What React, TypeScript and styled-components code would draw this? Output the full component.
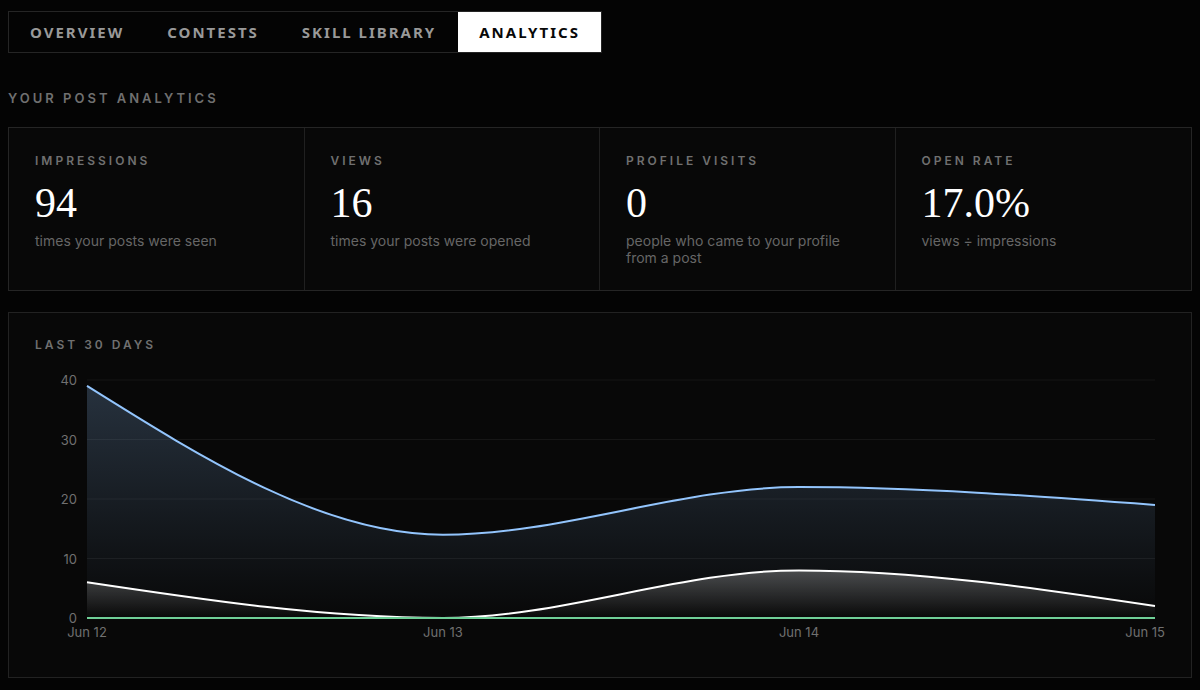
import React, { useLayoutEffect, useRef, useState } from "react";
import styled, { createGlobalStyle } from "styled-components";

const GlobalStyle = createGlobalStyle`
  *, *::before, *::after { box-sizing: border-box; }
  html { background: #040404; }
  body {
    margin: 0;
    color: #fff;
    font-family: "Inter", "Liberation Sans", sans-serif;
  }
`;

const Page = styled.main`
  padding: 11px 8px 12px;
`;

const Tabs = styled.nav`
  display: flex;
  gap: 1px;
  width: fit-content;
  border: 1px solid #252525;
`;

const Tab = styled.button<{ $active?: boolean }>`
  height: 40px;
  padding: 0 21px;
  border: 0;
  background: ${(p) => (p.$active ? "#fff" : "transparent")};
  color: ${(p) => (p.$active ? "#080808" : "#999")};
  font: 700 15px/20px "Noto Sans", sans-serif;
  letter-spacing: 2px;
  text-transform: uppercase;
  white-space: nowrap;
  cursor: pointer;
`;

const PageTitle = styled.h2`
  margin: 35px 0 19px;
  color: #707070;
  font-size: 13px;
  line-height: 20px;
  font-weight: 600;
  letter-spacing: 3px;
  text-transform: uppercase;
`;

const Stats = styled.section`
  display: grid;
  grid-template-columns: repeat(4, minmax(0, 1fr));
  border: 1px solid #252525;
  background: #080808;
`;

const Stat = styled.article`
  min-height: 162px;
  padding: 25px 26px 24px;
  &:not(:last-child) {
    border-right: 1px solid #202020;
  }
`;

const Label = styled.h3`
  margin: 0;
  color: #707070;
  font-size: 12px;
  line-height: 16px;
  font-weight: 600;
  letter-spacing: 3px;
  text-transform: uppercase;
`;

const Value = styled.p`
  margin: 13px 0 8px;
  font-family: Georgia, "Liberation Serif", serif;
  font-size: 42px;
  line-height: 42px;
`;

const Note = styled.p`
  max-width: 240px;
  margin: 0;
  color: #666;
  font-size: 14px;
  line-height: 17px;
`;

const ChartCard = styled.section`
  margin-top: 21px;
  padding: 24px 26px 25px;
  border: 1px solid #222;
  background: #080808;
`;

const ChartFrame = styled.div`
  height: 283px;
  margin-top: 16px;
`;

const ChartSvg = styled.svg`
  display: block;
  width: 100%;
  height: 100%;
`;

const AxisText = styled.text`
  fill: #707070;
  font-size: 13px;
`;

const stats = [
  { label: "Impressions", value: "94", note: "times your posts were seen" },
  { label: "Views", value: "16", note: "times your posts were opened" },
  { label: "Profile visits", value: "0", note: "people who came to your profile from a post" },
  { label: "Open rate", value: "17.0%", note: "views ÷ impressions" },
];

const days = ["Jun 12", "Jun 13", "Jun 14", "Jun 15"];
const series = [
  { id: "impressions", color: "#93c5fd", opacity: 0.22, values: [39, 14, 22, 19] },
  { id: "views", color: "#ffffff", opacity: 0.25, values: [6, 0, 8, 2] },
  { id: "visits", color: "#6fcf97", opacity: 0.2, values: [0, 0, 0, 0] },
];

type Point = [number, number];

// Monotone cubic interpolation along x.
function monotonePath(pts: Point[]) {
  const n = pts.length;
  const h = pts.slice(1).map((p, i) => p[0] - pts[i][0]);
  const s = h.map((w, i) => (pts[i + 1][1] - pts[i][1]) / w);
  const t = pts.map((_, i) => {
    if (i === 0 || i === n - 1) return 0;
    const p = (s[i - 1] * h[i] + s[i] * h[i - 1]) / (h[i - 1] + h[i]);
    const sign = Math.sign(s[i - 1]) + Math.sign(s[i]);
    return sign * Math.min(Math.abs(s[i - 1]), Math.abs(s[i]), 0.5 * Math.abs(p));
  });
  t[0] = (3 * s[0] - t[1]) / 2;
  t[n - 1] = (3 * s[n - 2] - t[n - 2]) / 2;
  return pts.slice(1).reduce((d, [x, y], i) => {
    const [px, py] = pts[i];
    const dx = (x - px) / 3;
    return `${d}C${px + dx},${py + dx * t[i]} ${x - dx},${y - dx * t[i + 1]} ${x},${y}`;
  }, `M${pts[0][0]},${pts[0][1]}`);
}

const TOP = 11;
const BOTTOM = 249;
const LEFT = 52;

function Chart() {
  const frame = useRef<HTMLDivElement>(null);
  const [width, setWidth] = useState(1130);

  useLayoutEffect(() => {
    const el = frame.current;
    if (!el) return;
    const measure = () => setWidth(el.clientWidth);
    measure();
    const observer = new ResizeObserver(measure);
    observer.observe(el);
    return () => observer.disconnect();
  }, []);

  const right = width - 10;
  const x = (i: number) => LEFT + ((right - LEFT) * i) / (days.length - 1);
  const y = (v: number) => BOTTOM - ((BOTTOM - TOP) * v) / 40;

  return (
    <ChartFrame ref={frame}>
      <ChartSvg role="img" aria-label="Impressions, views and profile visits by day">
        <defs>
          {series.map((s) => (
            <linearGradient key={s.id} id={s.id} x1="0" y1="0" x2="0" y2="1">
              <stop offset="0" stopColor={s.color} stopOpacity={s.opacity} />
              <stop offset="1" stopColor={s.color} stopOpacity="0" />
            </linearGradient>
          ))}
        </defs>
        {[0, 10, 20, 30, 40].map((v) => (
          <g key={v}>
            <line x1={LEFT} x2={right} y1={y(v)} y2={y(v)} stroke="#fff" strokeOpacity="0.06" />
            <AxisText x={LEFT - 10} y={y(v) + 5} textAnchor="end">{v}</AxisText>
          </g>
        ))}
        {series.map((s) => {
          const line = monotonePath(s.values.map((v, i): Point => [x(i), y(v)]));
          return (
            <g key={s.id}>
              <path d={`${line}L${right},${BOTTOM}L${LEFT},${BOTTOM}Z`} fill={`url(#${s.id})`} />
              <path d={line} fill="none" stroke={s.color} strokeWidth="2" />
            </g>
          );
        })}
        {days.map((day, i) => {
          const last = i === days.length - 1;
          return (
            <AxisText key={day} x={last ? width : x(i)} y={BOTTOM + 19} textAnchor={last ? "end" : "middle"}>
              {day}
            </AxisText>
          );
        })}
      </ChartSvg>
    </ChartFrame>
  );
}

export default function App() {
  return (
    <>
      <GlobalStyle />
      <Page>
        <Tabs aria-label="Dashboard sections">
          <Tab type="button">Overview</Tab>
          <Tab type="button">Contests</Tab>
          <Tab type="button">Skill Library</Tab>
          <Tab type="button" $active aria-current="page">Analytics</Tab>
        </Tabs>
        <PageTitle>Your post analytics</PageTitle>
        <Stats>
          {stats.map((s) => (
            <Stat key={s.label}>
              <Label>{s.label}</Label>
              <Value>{s.value}</Value>
              <Note>{s.note}</Note>
            </Stat>
          ))}
        </Stats>
        <ChartCard>
          <Label>Last 30 days</Label>
          <Chart />
        </ChartCard>
      </Page>
    </>
  );
}
